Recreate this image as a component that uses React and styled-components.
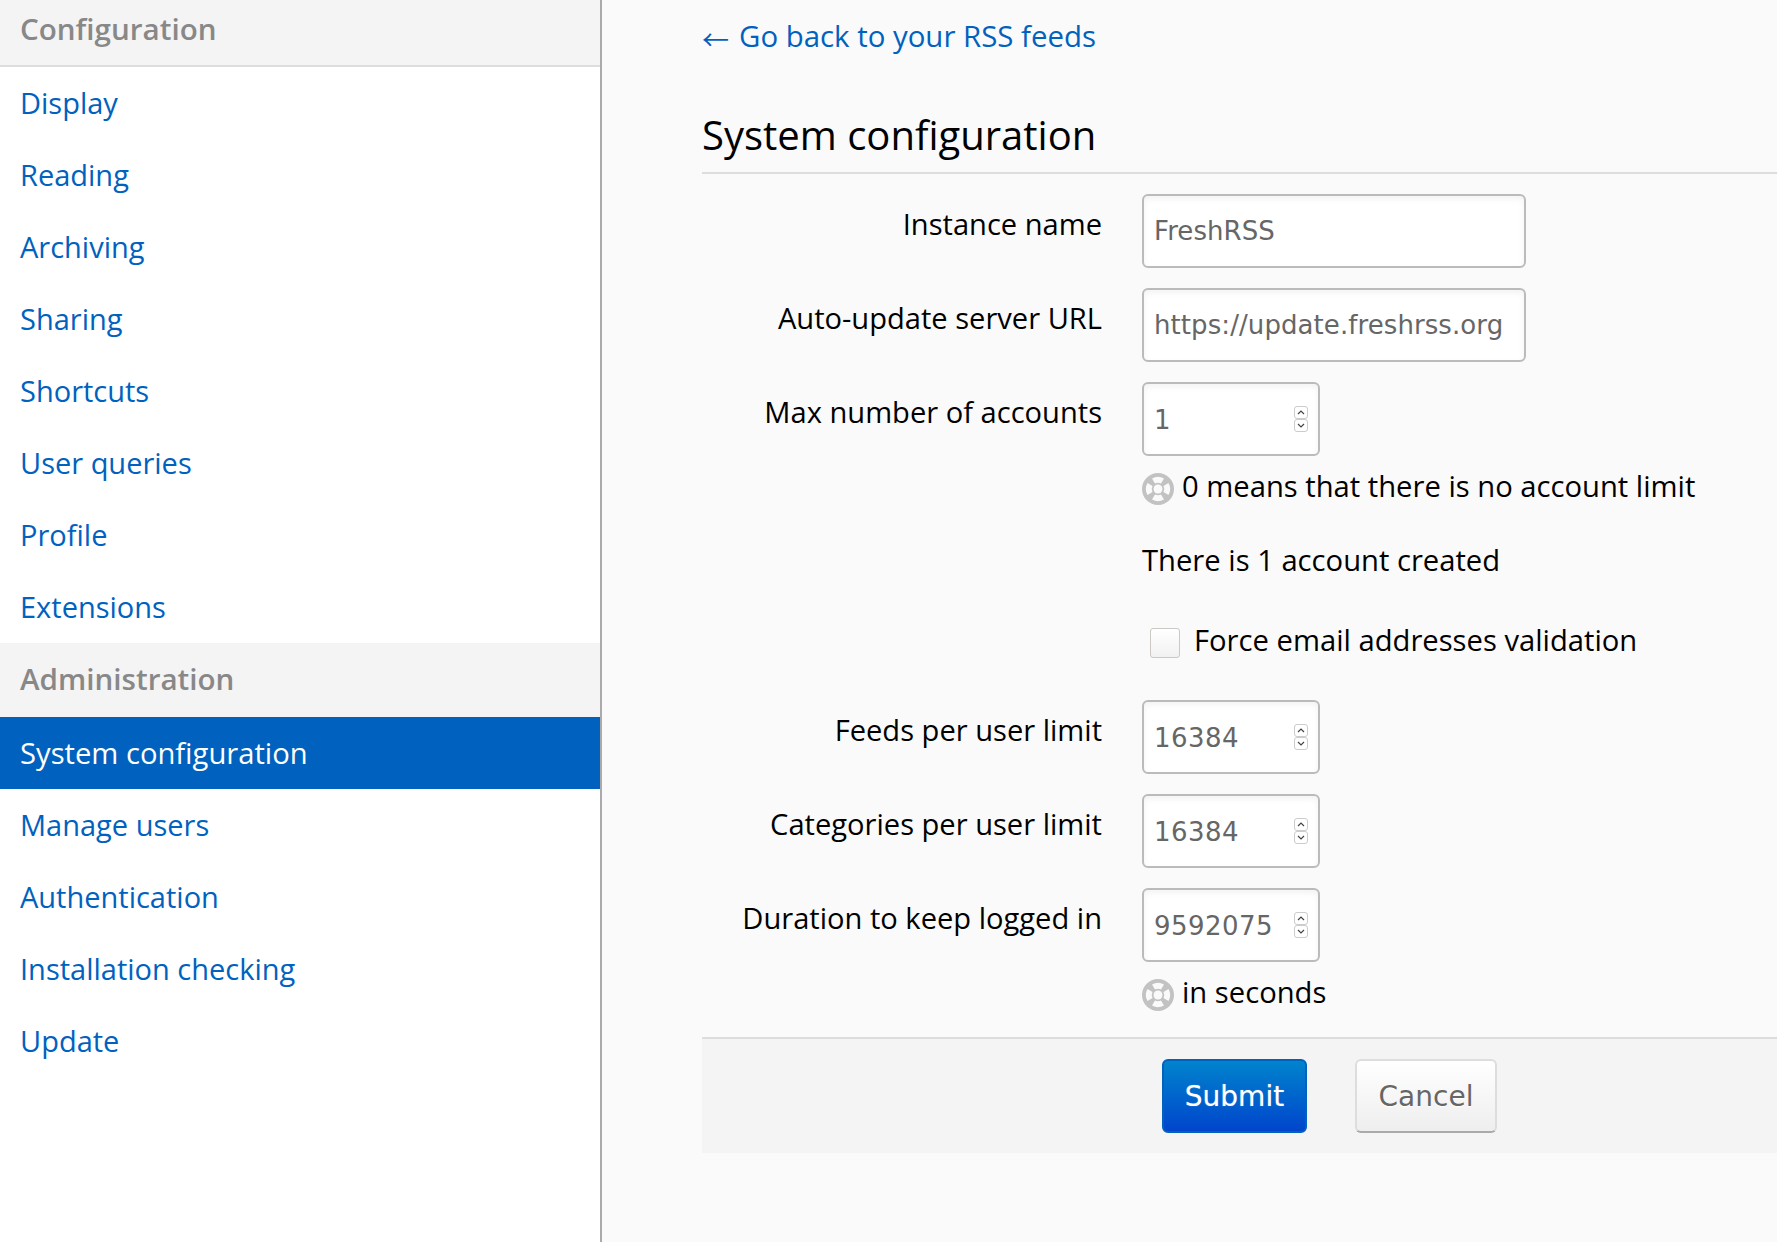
import styled, { createGlobalStyle } from "styled-components";

const GlobalStyle = createGlobalStyle`
  html, body {
    margin: 0;
    padding: 0;
    height: 100%;
    overflow: hidden;
    background: #fafafa;
  }
  * { box-sizing: border-box; }
`;

const configItems = ["Display", "Reading", "Archiving", "Sharing", "Shortcuts", "User queries", "Profile", "Extensions"];
const adminItems = ["System configuration", "Manage users", "Authentication", "Installation checking", "Update"];

function HelpIcon() {
  return (
    <HelpSvg viewBox="0 0 32 32" aria-hidden="true">
      <circle cx="16" cy="16" r="16" fill="#c2c2c2" />
      <path d="M10 5.5a12 12 0 0 1 12 0l-3 5a6.5 6.5 0 0 0-6 0z" fill="#fafafa" />
      <path d="M10 26.5a12 12 0 0 0 12 0l-3-5a6.5 6.5 0 0 1-6 0z" fill="#fafafa" />
      <path d="M5.5 10a12 12 0 0 0 0 12l5-3a6.5 6.5 0 0 1 0-6z" fill="#fafafa" />
      <path d="M26.5 10a12 12 0 0 1 0 12l-5-3a6.5 6.5 0 0 0 0-6z" fill="#fafafa" />
      <circle cx="16" cy="16" r="4.5" fill="#fafafa" />
    </HelpSvg>
  );
}

function NumberInput({ value }) {
  return (
    <NumberBox>
      <NumberField defaultValue={value} />
      <Spinner>
        <SpinButton>
          <svg width="8" height="5" viewBox="0 0 8 5"><path d="M1 4l3-3 3 3" fill="none" stroke="#444" strokeWidth="1.2" /></svg>
        </SpinButton>
        <SpinButton>
          <svg width="8" height="5" viewBox="0 0 8 5"><path d="M1 1l3 3 3-3" fill="none" stroke="#444" strokeWidth="1.2" /></svg>
        </SpinButton>
      </Spinner>
    </NumberBox>
  );
}

export default function App() {
  return (
    <Page>
      <GlobalStyle />
      <Sidebar>
        <NavHeader $first>Configuration</NavHeader>
        {configItems.map((item) => (
          <NavItem key={item}>{item}</NavItem>
        ))}
        <NavHeader>Administration</NavHeader>
        {adminItems.map((item) => (
          <NavItem key={item} $active={item === "System configuration"}>{item}</NavItem>
        ))}
      </Sidebar>
      <Main>
        <BackLink><Arrow>←</Arrow> Go back to your RSS feeds</BackLink>
        <Title>System configuration</Title>
        <Row>
          <Label>Instance name</Label>
          <TextField defaultValue="FreshRSS" />
        </Row>
        <Row>
          <Label>Auto-update server URL</Label>
          <TextField defaultValue="https://update.freshrss.org" />
        </Row>
        <Row>
          <Label>Max number of accounts</Label>
          <Controls>
            <NumberInput value="1" />
            <Help><HelpIcon />0 means that there is no account limit</Help>
          </Controls>
        </Row>
        <Row $gap="36px">
          <span />
          <Plain>There is 1 account created</Plain>
        </Row>
        <Row $gap="38px">
          <span />
          <CheckLine>
            <CheckBox />
            Force email addresses validation
          </CheckLine>
        </Row>
        <Row>
          <Label>Feeds per user limit</Label>
          <NumberInput value="16384" />
        </Row>
        <Row>
          <Label>Categories per user limit</Label>
          <NumberInput value="16384" />
        </Row>
        <Row>
          <Label>Duration to keep logged in</Label>
          <Controls>
            <NumberInput value="9592075" />
            <Help><HelpIcon />in seconds</Help>
          </Controls>
        </Row>
        <Footer>
          <SubmitButton>Submit</SubmitButton>
          <CancelButton>Cancel</CancelButton>
        </Footer>
      </Main>
    </Page>
  );
}

const Page = styled.div`
  display: flex;
  height: 1242px;
  font-family: "Open Sans", sans-serif;
  font-size: 29px;
  color: #000;
`;

const Sidebar = styled.nav`
  flex: 0 0 602px;
  background: #fff;
  border-right: 2px solid #aaa;
`;

const NavHeader = styled.div`
  height: ${({ $first }) => ($first ? "67px" : "74px")};
  padding-left: 20px;
  line-height: ${({ $first }) => ($first ? "58px" : "72px")};
  font-size: 29.6px;
  font-weight: 600;
  color: #888;
  background: #f4f4f4;
  border-bottom: ${({ $first }) => ($first ? "2px solid #ddd" : "none")};
`;

const NavItem = styled.a`
  display: block;
  height: 72px;
  padding-left: 20px;
  line-height: 72px;
  font-size: ${({ $active }) => ($active ? "29.2px" : "29px")};
  color: ${({ $active }) => ($active ? "#fff" : "#0062be")};
  background: ${({ $active }) => ($active ? "#0062be" : "transparent")};
`;

const Main = styled.main`
  flex: 1;
  min-width: 0;
  padding: 16px 0 0 100px;
  font-size: 29.2px;
`;

const BackLink = styled.a`
  display: block;
  height: 40px;
  line-height: 40px;
  font-size: 29.4px;
  color: #0062be;
`;

const Arrow = styled.span`
  margin-right: 2.4px;
  font-family: "Noto Sans CJK SC", sans-serif;
  font-size: 27px;
  line-height: 0;
  vertical-align: -3px;
`;

const Title = styled.h1`
  margin: 39px 0 20px;
  height: 79px;
  font-size: 40px;
  font-weight: 400;
  line-height: 80px;
  border-bottom: 2px solid #ddd;
`;

const Row = styled.div`
  display: grid;
  grid-template-columns: 400px 1fr;
  column-gap: 40px;
  margin-bottom: ${({ $gap }) => $gap || "20px"};
`;

const Label = styled.label`
  padding-top: 8px;
  text-align: right;
  line-height: 44px;
  font-size: 29.1px;
`;

const Controls = styled.div`
  display: flex;
  flex-direction: column;
  align-items: flex-start;
`;

const TextField = styled.input`
  width: 384px;
  height: 74px;
  padding: 0 10px;
  font-family: "DejaVu Sans", sans-serif;
  font-size: 26px;
  letter-spacing: 0.08px;
  color: #666;
  background: #fff;
  border: 2px solid #bbb;
  border-radius: 6px;
  box-shadow: inset 0 3px 6px rgba(0, 0, 0, 0.05);
  outline: none;
`;

const NumberBox = styled.div`
  display: flex;
  align-items: center;
  width: 178px;
  height: 74px;
  padding: 0 10px;
  background: #fff;
  border: 2px solid #bbb;
  border-radius: 6px;
  box-shadow: inset 0 3px 6px rgba(0, 0, 0, 0.05);
`;

const NumberField = styled.input`
  flex: 1;
  min-width: 0;
  padding: 1px 0 0;
  font-family: "DejaVu Sans", sans-serif;
  font-size: 26px;
  letter-spacing: 0.45px;
  color: #666;
  background: transparent;
  border: none;
  outline: none;
`;

const Spinner = styled.div`
  display: flex;
  flex-direction: column;
  flex: 0 0 14px;
  margin-left: 6px;
`;

const SpinButton = styled.div`
  display: flex;
  align-items: center;
  justify-content: center;
  height: 13px;
  background: #fff;
  border: 1px solid #ccc;
  border-radius: 3px;
`;

const Help = styled.div`
  display: flex;
  align-items: center;
  gap: 8px;
  height: 60px;
  line-height: 60px;
`;

const HelpSvg = styled.svg`
  width: 32px;
  height: 32px;
  margin-top: 6px;
  flex: none;
`;

const Plain = styled.div`
  margin-top: 2px;
  line-height: 44px;
`;

const CheckLine = styled.label`
  display: flex;
  align-items: center;
  gap: 14px;
  padding-left: 8px;
  height: 44px;
`;

const CheckBox = styled.span`
  width: 30px;
  height: 30px;
  margin-top: 6px;
  background: linear-gradient(#fff, #f1f1f1);
  border: 1px solid #ccc8c4;
  border-radius: 3px;
`;

const Footer = styled.div`
  display: flex;
  align-items: flex-start;
  gap: 48px;
  height: 116px;
  margin-top: -5px;
  padding: 20px 0 0 460px;
  background: #f4f4f4;
  border-top: 2px solid #ddd;
`;

const SubmitButton = styled.button`
  width: 145px;
  height: 74px;
  font-family: "DejaVu Sans", sans-serif;
  font-size: 28px;
  color: #fff;
  background: linear-gradient(#0084cc, #0045cc);
  border: 2px solid #0062be;
  border-radius: 6px;
  text-shadow: 0 0 1px rgba(255, 255, 255, 0.5);
`;

const CancelButton = styled.button`
  width: 142px;
  height: 74px;
  font-family: "DejaVu Sans", sans-serif;
  font-size: 28px;
  color: #666;
  background: linear-gradient(#fff, #eee);
  border: 2px solid #ddd;
  border-bottom-color: #aaa;
  border-radius: 6px;
  text-shadow: 0 1px 1px #fff;
`;
